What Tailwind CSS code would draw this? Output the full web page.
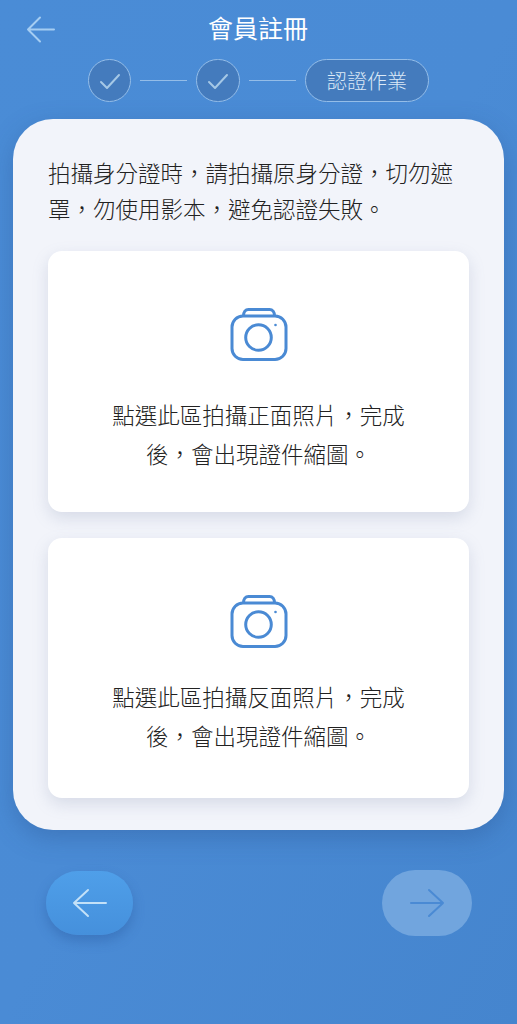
<!DOCTYPE html>
<html lang="zh-Hant">
<head>
    <meta charset="UTF-8">
    <meta name="viewport" content="width=device-width, initial-scale=1.0">
    <title>會員註冊</title>
    <script src="https://cdn.jsdelivr.net/npm/@tailwindcss/browser@4"></script>
</head>
<body class="bg-[#4a8ad4] font-['Noto_Sans_CJK_TC',sans-serif]">
    <div class="w-[517px] h-[1024px] overflow-hidden bg-gradient-to-br from-[#4a8cd6] via-[#4a8bd5] to-[#4585ce]">
        <!-- header -->
        <div class="flex items-center h-[59px] pb-[2px] pl-[26px]">
            <svg class="w-[30px] h-[28px] shrink-0" viewBox="0 0 30 28" fill="none" stroke="#a5cdf2" stroke-width="2" stroke-linecap="round" stroke-linejoin="round">
                <path d="M28 14.500H2M14 2.500l-12 12 12 12"/>
            </svg>
            <h1 class="ml-[152px] mb-[3px] text-[25px] leading-[32px] text-white">會員註冊</h1>
        </div>

        <!-- steps -->
        <div class="flex items-center justify-center h-[43px]">
            <div class="flex items-center justify-center w-[43px] h-[43px] rounded-full bg-[#447bbd] border border-[#94bde8]">
                <svg class="w-[24px] h-[24px]" viewBox="0 0 24 24" fill="none" stroke="#a5c8e6" stroke-width="2" stroke-linecap="round" stroke-linejoin="round"><path d="M3 13l6 6L21 6"/></svg>
            </div>
            <div class="w-[47px] h-px bg-[#94bde8] mx-[9px]"></div>
            <div class="flex items-center justify-center w-[44px] h-[43px] rounded-full bg-[#447bbd] border border-[#94bde8]">
                <svg class="w-[24px] h-[24px]" viewBox="0 0 24 24" fill="none" stroke="#a5c8e6" stroke-width="2" stroke-linecap="round" stroke-linejoin="round"><path d="M3 13l6 6L21 6"/></svg>
            </div>
            <div class="w-[47px] h-px bg-[#94bde8] mx-[9px]"></div>
            <div class="flex items-center justify-center w-[124px] h-[43px] rounded-full bg-[#447bbd] border border-[#94bde8] text-[20px] text-[#dbe9f7] font-light">認證作業</div>
        </div>

        <!-- main card -->
        <div class="mx-[13px] mt-[17px] h-[711px] w-[491px] rounded-[40px] bg-[#f2f4fa] px-[35px] pt-[35px] shadow-[0_8px_24px_rgba(40,80,140,0.35)]">
            <p class="text-[22.5px] leading-[36px] text-[#222] h-[72px] font-light">拍攝身分證時，請拍攝原身分證，切勿遮罩，勿使用影本，避免認證失敗。</p>

            <div class="mt-[25px] h-[261px] rounded-[14px] bg-white shadow-[0_6px_16px_rgba(120,130,170,0.22)] flex flex-col items-center pt-[57px]">
                <svg class="w-[58px] h-[54px]" viewBox="0 0 58 54" fill="none" stroke="#4a8ad4" stroke-width="3">
                    <rect x="2" y="8" width="54" height="43.500" rx="11"/>
                    <path d="M13.500 8c0-4 2-6.500 5-6.500h21c3 0 5 2.500 5 6.500"/>
                    <circle cx="28.500" cy="29.500" r="12.800"/>
                    <circle cx="45.500" cy="17" r="1.300" fill="#4a8ad4" stroke="none"/>
                </svg>
                <p class="mt-[33px] w-[293px] text-center text-[22.5px] leading-[39px] text-[#222] font-light">點選此區拍攝正面照片，完成後，會出現證件縮圖。</p>
            </div>

            <div class="mt-[26px] h-[260px] rounded-[14px] bg-white shadow-[0_6px_16px_rgba(120,130,170,0.22)] flex flex-col items-center pt-[57px]">
                <svg class="w-[58px] h-[54px]" viewBox="0 0 58 54" fill="none" stroke="#4a8ad4" stroke-width="3">
                    <rect x="2" y="8" width="54" height="43.500" rx="11"/>
                    <path d="M13.500 8c0-4 2-6.500 5-6.500h21c3 0 5 2.500 5 6.500"/>
                    <circle cx="28.500" cy="29.500" r="12.800"/>
                    <circle cx="45.500" cy="17" r="1.300" fill="#4a8ad4" stroke="none"/>
                </svg>
                <p class="mt-[28px] w-[293px] text-center text-[22.5px] leading-[39px] text-[#222] font-light">點選此區拍攝反面照片，完成後，會出現證件縮圖。</p>
            </div>
        </div>

        <!-- bottom buttons -->
        <div class="flex items-center justify-between mt-[40px] pl-[46px] pr-[45px]">
            <button class="flex items-center justify-center w-[87px] h-[64px] rounded-[32px] bg-gradient-to-b from-[#4f9fe9] to-[#4590dc] shadow-[0_6px_12px_rgba(40,90,160,0.4)]">
                <svg class="w-[36px] h-[30px]" viewBox="0 0 36 30" fill="none" stroke="#c3e1f8" stroke-width="2" stroke-linecap="round" stroke-linejoin="round"><path d="M34 15H2M16 2 2 15l14 13"/></svg>
            </button>
            <button class="flex items-center justify-center w-[90px] h-[66px] rounded-[33px] bg-[#71a5de]">
                <svg class="w-[36px] h-[30px]" viewBox="0 0 36 30" fill="none" stroke="#4a8ad4" stroke-width="2" stroke-linecap="round" stroke-linejoin="round"><path d="M2 15h32M20 2l14 13-14 13"/></svg>
            </button>
        </div>
    </div>
</body>
</html>
